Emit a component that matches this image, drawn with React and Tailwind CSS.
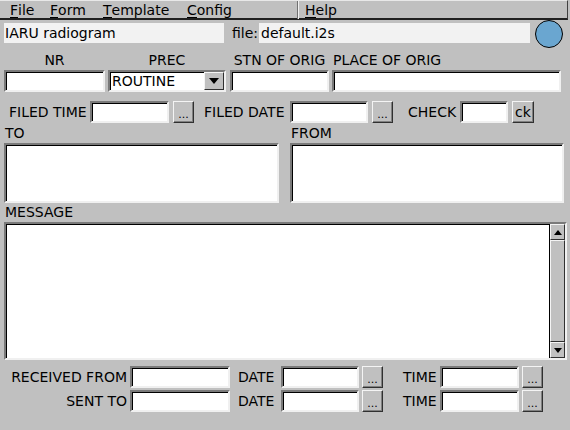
const FONT = { fontFamily: '"DejaVu Sans", "Liberation Sans", sans-serif' };

function Field({ w, h = 22, children, className = "" }) {
  return (
    <div
      className={`bg-white border-2 border-t-[#7a7a7a] border-l-[#7a7a7a] border-r-[#f0f0f0] border-b-[#f0f0f0] shadow-[inset_1px_1px_0_#000] shrink-0 ${className}`}
      style={{ width: w, height: h }}
    >
      {children}
    </div>
  );
}

function Btn({ w = 21, h = 22, label = "...", className = "" }) {
  return (
    <div
      className={`flex items-center justify-center bg-[#c0c0c0] border border-t-[#f4f4f4] border-l-[#f4f4f4] border-r-[#303030] border-b-[#303030] shadow-[inset_-1px_-1px_0_#808080] text-black shrink-0 ${className}`}
      style={{ width: w, height: h }}
    >
      <span className={label === "..." ? "text-[11px] leading-none mt-[4px]" : "text-[14px] leading-none"}>{label}</span>
    </div>
  );
}

function Menu({ w, children, first }) {
  return (
    <span className="shrink-0" style={{ width: w }}>
      <span className="inline-block leading-[14px] border-b border-b-black">{first}</span>
      {children}
    </span>
  );
}

export default function App() {
  return (
    <div className="w-[570px] h-[430px] bg-[#c0c0c0] text-black text-[14px] leading-[16px] overflow-hidden" style={FONT}>
      {/* menu bar */}
      <div className="h-[20px] w-[568px] flex items-center border-t border-t-[#e8e8e8] border-b-2 border-b-[#202020] border-r border-r-[#404040] pl-[10px]">
        <Menu w={40} first="F">ile</Menu>
        <Menu w={53} first="F">orm</Menu>
        <Menu w={84} first="T">emplate</Menu>
        <Menu w={110} first="C">onfig</Menu>
        <span className="w-[2px] h-[18px] border-l border-l-[#707070] border-r border-r-[#f0f0f0] mr-[6px]" />
        <Menu w={50} first="H">elp</Menu>
      </div>

      {/* title row */}
      <div className="flex items-start h-[28px]">
        <div className="ml-[4px] mt-[3px] w-[220px] h-[20px] bg-[#f2f2f2] flex items-center pl-[1px]">IARU radiogram</div>
        <span className="ml-[8px] mt-[5px] w-[27px]">file:</span>
        <div className="mt-[3px] w-[271px] h-[20px] bg-[#f2f2f2] flex items-center pl-[2px]">default.i2s</div>
        <div className="ml-[5px] w-[28px] h-[28px] rounded-full bg-[#6aa6d0] border border-black" />
      </div>

      {/* labels row 1 */}
      <div className="flex mt-[4px] h-[16px]">
        <span className="ml-[4px] w-[101px] text-center">NR</span>
        <span className="ml-[3px] w-[118px] text-center">PREC</span>
        <span className="ml-[4px] w-[99px] text-center">STN OF ORIG</span>
        <span className="ml-[4px]">PLACE OF ORIG</span>
      </div>

      {/* inputs row 1 */}
      <div className="flex mt-[2px] h-[22px]">
        <Field w={101} className="ml-[4px]" />
        <div className="ml-[3px] w-[118px] h-[22px] flex bg-white border-2 border-t-[#7a7a7a] border-l-[#7a7a7a] border-r-[#f0f0f0] border-b-[#f0f0f0] shadow-[inset_1px_1px_0_#000]">
          <span className="flex-1 pl-[2px] leading-[18px]">ROUTINE</span>
          <div className="w-[20px] h-[18px] bg-[#c0c0c0] border border-t-[#f4f4f4] border-l-[#f4f4f4] border-r-[#303030] border-b-[#303030] flex items-center justify-center">
            <svg width="10" height="6" viewBox="0 0 10 6"><path d="M0 0h10L5 6z" fill="#000" /></svg>
          </div>
        </div>
        <Field w={99} className="ml-[4px]" />
        <Field w={229} className="ml-[3px]" />
      </div>

      {/* row 2 */}
      <div className="flex items-center mt-[9px] h-[22px]">
        <span className="ml-[9px] w-[81px]">FILED TIME</span>
        <Field w={79} />
        <Btn className="ml-[4px]" />
        <span className="ml-[10px] w-[86px]">FILED DATE</span>
        <Field w={78} />
        <Btn className="ml-[4px]" />
        <span className="ml-[15px] w-[52px]">CHECK</span>
        <Field w={48} />
        <Btn w={22} label="ck" className="ml-[4px]" />
      </div>

      {/* TO / FROM */}
      <div className="flex mt-[2px]">
        <div className="ml-[4px] w-[275px]">
          <div className="pl-[1px] h-[16px]">TO</div>
          <Field w={275} h={60} className="mt-[2px]" />
        </div>
        <div className="ml-[11px] w-[274px]">
          <div className="pl-[1px] h-[16px]">FROM</div>
          <Field w={274} h={60} className="mt-[2px]" />
        </div>
      </div>

      {/* MESSAGE */}
      <div className="ml-[4px] mt-[1px] pl-[1px] h-[16px]">MESSAGE</div>
      <div className="ml-[4px] mt-[2px] w-[563px] h-[138px] bg-white border-2 border-t-[#7a7a7a] border-l-[#7a7a7a] border-r-[#f0f0f0] border-b-[#f0f0f0] shadow-[inset_1px_1px_0_#000] flex justify-end">
        <div className="w-[16px] h-full flex flex-col bg-[#c0c0c0] border-l border-l-black">
          <div className="h-[16px] flex items-center justify-center border border-t-[#f4f4f4] border-l-[#f4f4f4] border-r-[#303030] border-b-[#303030]">
            <svg width="8" height="5" viewBox="0 0 8 5"><path d="M0 5h8L4 0z" fill="#000" /></svg>
          </div>
          <div className="flex-1 border border-t-[#f4f4f4] border-l-[#f4f4f4] border-r-[#303030] border-b-[#303030]" />
          <div className="h-[16px] flex items-center justify-center border border-t-[#f4f4f4] border-l-[#f4f4f4] border-r-[#303030] border-b-[#303030]">
            <svg width="8" height="5" viewBox="0 0 8 5"><path d="M0 0h8L4 5z" fill="#000" /></svg>
          </div>
        </div>
      </div>

      {/* bottom rows */}
      {["RECEIVED FROM", "SENT TO"].map((lbl, i) => (
        <div key={lbl} className={`flex items-center h-[22px] ${i === 0 ? "mt-[6px]" : "mt-[2px]"}`}>
          <span className="w-[128px] text-right pr-[1px]">{lbl}</span>
          <Field w={100} className="ml-[2px]" />
          <span className="ml-[8px] w-[43px]">DATE</span>
          <Field w={78} />
          <Btn className="ml-[3px]" />
          <span className="ml-[20px] w-[37px]">TIME</span>
          <Field w={79} />
          <Btn className="ml-[3px]" />
        </div>
      ))}
    </div>
  );
}
